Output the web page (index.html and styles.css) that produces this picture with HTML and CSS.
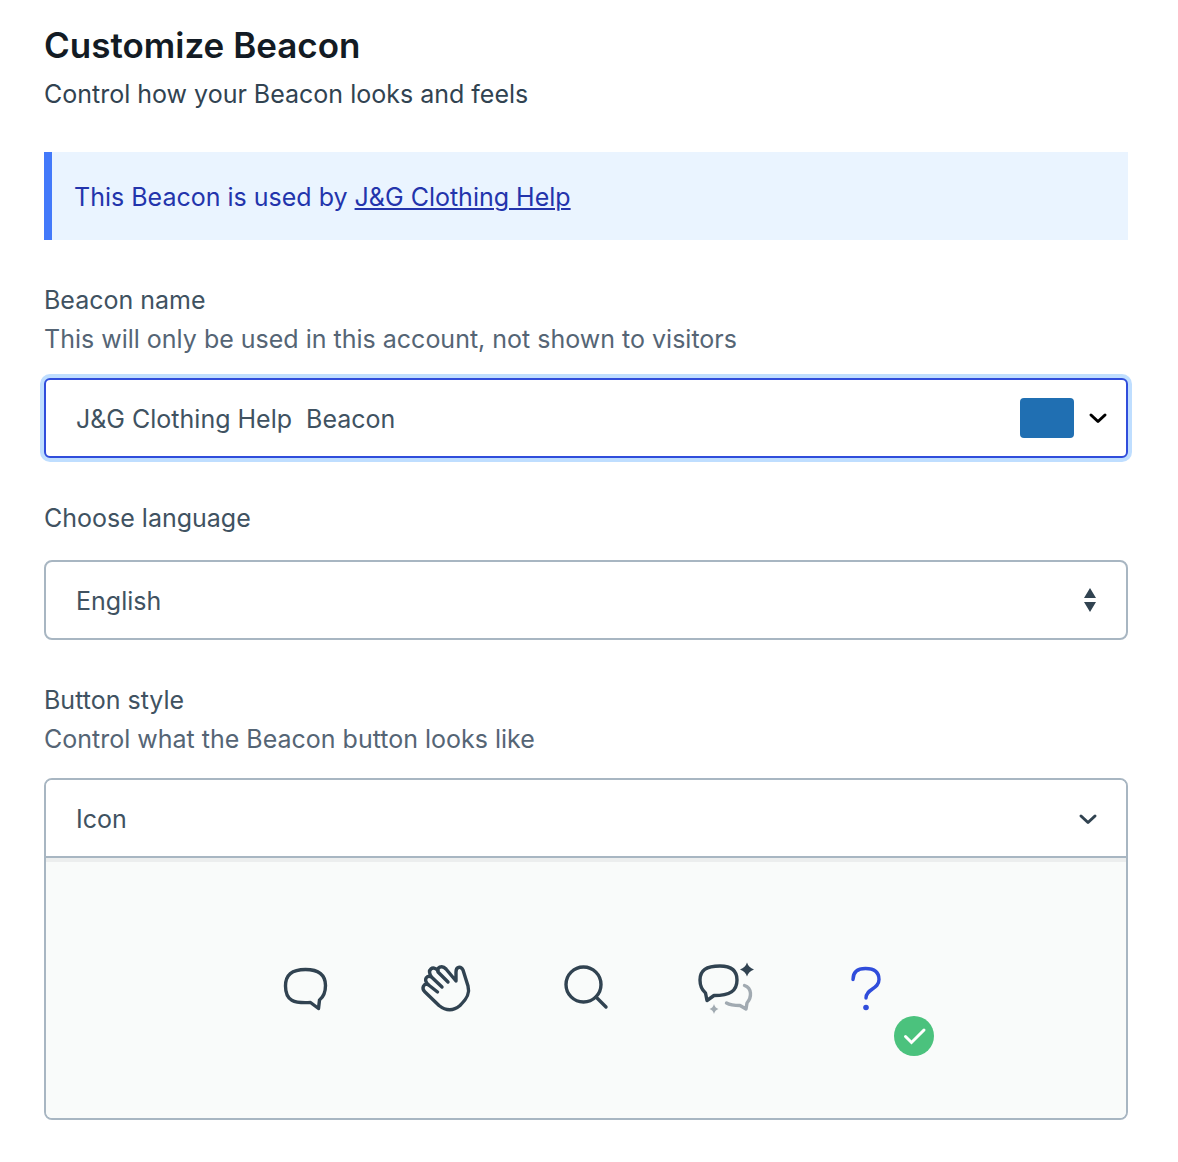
FILE: index.html
```html
<!DOCTYPE html>
<html lang="en">
<head>
<meta charset="UTF-8">
<meta name="viewport" content="width=device-width, initial-scale=1.0">
<title>Customize Beacon</title>
<link rel="stylesheet" href="styles.css">
</head>
<body>
<main class="page">
    <h1 class="title">Customize Beacon</h1>
    <p class="subtitle">Control how your Beacon looks and feels</p>

    <div class="notice">This Beacon is used by <a href="#">J&amp;G Clothing Help</a></div>

    <form>
        <div class="field">
            <label class="label" for="beacon_name">Beacon name</label>
            <p class="help" id="name_help">This will only be used in this account, not shown to visitors</p>
            <div class="control control-active">
                <input class="text" type="text" id="beacon_name" aria-describedby="name_help" value="J&amp;G Clothing Help&nbsp; Beacon">
                <button class="color" type="button" aria-label="Beacon color">
                    <span class="swatch"></span>
                    <svg class="chevron" viewBox="0 0 20 12"><path d="M3 3l7 6.500 7-6.500"/></svg>
                </button>
            </div>
        </div>

        <div class="field field-single">
            <label class="label" for="language">Choose language</label>
            <div class="control">
                <select class="select" id="language">
                    <option>English</option>
                </select>
                <svg class="sort" viewBox="0 0 12 24"><path d="M6 0l6 10H0zM6 24l6-10H0z"/></svg>
            </div>
        </div>

        <div class="field">
            <span class="label" id="style_label">Button style</span>
            <p class="help">Control what the Beacon button looks like</p>
            <div class="accordion">
                <button class="accordion-head" type="button" aria-expanded="true" aria-controls="icons">
                    Icon
                    <svg class="chevron" viewBox="0 0 20 12"><path d="M3 3l7 6.500 7-6.500"/></svg>
                </button>
                <div class="icons" id="icons" role="radiogroup" aria-labelledby="style_label">
                    <label class="option">
                        <input type="radio" name="icon" aria-label="Speech bubble">
                        <svg class="icon" viewBox="-4 -2 80 80">
                            <path d="M35.500 19.500C49 19.500 55.500 25 55.500 35.500C55.500 42.500 54 46.500 49.500 50L48.500 58.500L40.500 52.500C24 53.500 15.500 51 15.500 36C15.500 25 21.500 19.500 35.500 19.500Z"/>
                        </svg>
                    </label>
                    <label class="option">
                        <input type="radio" name="icon" aria-label="Waving hand">
                        <svg class="icon" viewBox="0 -2 80 80">
                            <path d="M31.500 42L22 34.500C17.500 33 15.500 38 18.500 41.500L33 55.500C40 61 47.500 61 54 55.500C61.500 48.500 64 43 62 36L57 20C54.500 15.500 50 17 50 22V31L40 19C36 14.500 30 17.500 32 22L42 32"/>
                            <path d="M22 34.500C17 29.500 21 24.500 25.500 27L36 37M25.500 27C20.500 19.500 27 15 32 20.500"/>
                        </svg>
                    </label>
                    <label class="option">
                        <input type="radio" name="icon" aria-label="Search">
                        <svg class="icon" viewBox="-4 -2 80 80">
                            <circle cx="33.500" cy="34.500" r="17.500"/>
                            <path d="M46 47L56 57"/>
                        </svg>
                    </label>
                    <label class="option">
                        <input type="radio" name="icon" aria-label="Conversation">
                        <svg class="icon" viewBox="1 -2 80 80">
                            <path d="M35 16C47 16 52 21 52 30C52 41 45 45.500 29 45.500L22 50.500L20.500 43C16.500 39.500 15 36 15 30C15 20.500 21 16 35 16Z"/>
                            <path class="muted" d="M59.500 35.500C67 38 67 47 62 53L61 59L55 55.500C48 55.500 45 55 41.500 53"/>
                            <path class="solid" d="M62 12.500Q63.500 17.500 69 19.500Q63.500 21.500 62 26.500Q60.500 21.500 55 19.500Q60.500 17.500 62 12.500Z"/>
                            <path class="solid solid-muted" d="M29 54Q30 58 33.500 59Q30 60 29 64Q28 60 24.500 59Q28 58 29 54Z"/>
                        </svg>
                    </label>
                    <label class="option">
                        <input type="radio" name="icon" aria-label="Question mark" checked>
                        <svg class="icon" viewBox="-9 -2 80 80">
                            <path d="M18 29.500C18 21.500 23 18.500 30.500 18.500C39.500 18.500 44 22 44 29.500C44 39.500 31 38.500 31 48"/>
                            <circle class="dot" cx="31" cy="57.500" r="2.800"/>
                        </svg>
                        <svg class="check" viewBox="0 0 40 40"><path d="M11.500 20.500l6 6 12.500-12.500"/></svg>
                    </label>
                </div>
            </div>
        </div>
    </form>
</main>
</body>
</html>
```
FILE: styles.css
```css
* {
    box-sizing: border-box;
}

body {
    margin: 0;
    background: #fff;
    color: #405261;
    font-family: Inter, "Liberation Sans", sans-serif;
    font-size: 25px;
    line-height: 39px;
}

input, select, button {
    font: inherit;
    color: inherit;
}

.page {
    padding: 25px 50px 42px 44px;
}

.title {
    margin: 0 0 10px;
    font-size: 35px;
    font-weight: 600;
    line-height: 40px;
    color: #131b24;
}

.subtitle {
    margin: 0 0 38px;
    color: #314351;
}

.notice {
    display: flex;
    align-items: center;
    height: 88px;
    padding: 2px 22px 0;
    border-left: 8px solid #4379fa;
    background: #eaf4ff;
    color: #2334ac;
    white-space: pre;
}

.notice a {
    color: inherit;
    text-decoration-thickness: 2px;
    text-underline-offset: 2px;
}

.field {
    display: flex;
    flex-direction: column;
    margin-top: 41px;
}

.help {
    margin: 0 0 19px;
    color: #556575;
}

.field-single .label {
    margin-bottom: 22px;
}

.control {
    display: flex;
    align-items: center;
    position: relative;
    height: 80px;
    border: 2px solid #a8b6c2;
    border-radius: 8px;
    background: #fff;
}

.control-active {
    border-color: #304ddb;
    border-radius: 6px;
    box-shadow: 0 0 0 4px #bfdeff;
}

.text {
    flex: 1;
    min-width: 0;
    padding: 2px 30px 0;
    border: 0;
    outline: 0;
    background: none;
}

.color {
    display: flex;
    align-items: center;
    gap: 14px;
    padding: 0 18px 0 0;
    border: 0;
    background: none;
    color: #000;
}

.swatch {
    width: 54px;
    height: 40px;
    border-radius: 4px;
    background: #206fb2;
}

.chevron {
    width: 20px;
    height: 12px;
    fill: none;
    stroke: currentColor;
    stroke-width: 3;
    stroke-linecap: round;
    stroke-linejoin: round;
}

.select {
    width: 100%;
    height: 100%;
    padding: 2px 30px 0;
    border: 0;
    border-radius: 6px;
    appearance: none;
    background: none;
}

.sort {
    position: absolute;
    right: 30px;
    width: 12px;
    height: 24px;
    fill: #314351;
    pointer-events: none;
}

.accordion {
    border: 2px solid #a8b6c2;
    border-radius: 8px;
    overflow: hidden;
}

.accordion-head {
    display: flex;
    align-items: center;
    justify-content: space-between;
    width: 100%;
    height: 78px;
    padding: 2px 28px 0 30px;
    border: 0;
    border-bottom: 2px solid #a8b6c2;
    background: #fff;
}

.accordion-head .chevron {
    color: #314351;
}

.icons {
    display: flex;
    justify-content: center;
    gap: 60px;
    padding: 90px 20px;
    background: #f9fbfa;
    box-shadow: inset 0 4px #eceeee;
}

.option {
    position: relative;
    width: 80px;
    height: 80px;
    color: #314351;
}

.option input {
    position: absolute;
    inset: 0;
    margin: 0;
    opacity: 0;
}

.icon {
    display: block;
    width: 80px;
    height: 80px;
    fill: none;
    stroke: currentColor;
    stroke-width: 3.4;
    stroke-linecap: round;
    stroke-linejoin: round;
}

.icon .muted {
    stroke: #a1aab1;
}

.icon .solid {
    fill: #314351;
    stroke: none;
}

.icon .solid-muted {
    fill: #a1aab1;
}

.icon .dot {
    fill: currentColor;
    stroke: none;
}

.option:has(input:checked) {
    color: #304ddb;
}

.check {
    position: absolute;
    right: -28px;
    bottom: -28px;
    width: 40px;
    height: 40px;
    border-radius: 50%;
    background: #4bc27d;
    fill: none;
    stroke: #fff;
    stroke-width: 3;
    stroke-linecap: round;
}
```
